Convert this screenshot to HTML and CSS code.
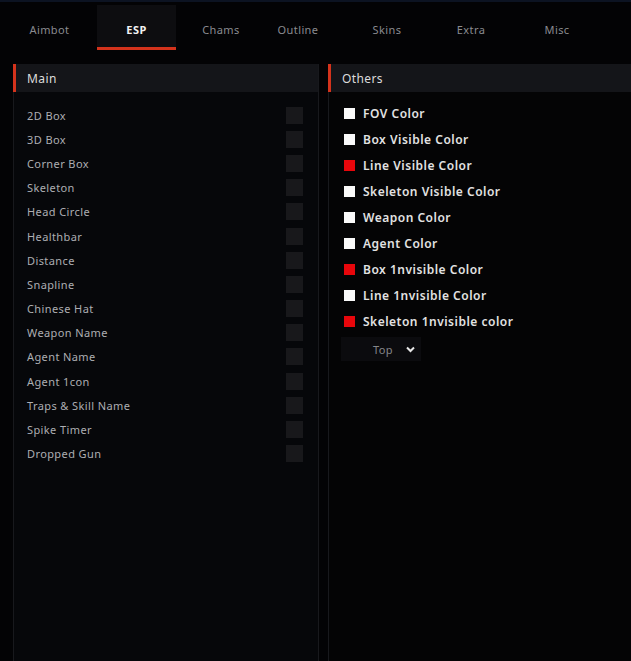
FILE: index.html
```html
<!DOCTYPE html>
<html lang="en">

<head>
  <meta charset="UTF-8" />
  <title>ESP</title>
  <link rel="stylesheet" href="styles.css">
</head>

<body>
  <div class="menu">
    <ul class="tabs">
      <li>Aimbot</li>
      <li class="current">ESP</li>
      <li>Chams</li>
      <li>Outline</li>
      <li>Skins</li>
      <li>Extra</li>
      <li>Misc</li>
    </ul>

    <div class="panels">
      <!-- 左侧 Main -->
      <div class="panel main">
        <div class="panel-head">Main</div>
        <ul class="toggles">
          <li><span>2D Box</span><i></i></li>
          <li><span>3D Box</span><i></i></li>
          <li><span>Corner Box</span><i></i></li>
          <li><span>Skeleton</span><i></i></li>
          <li><span>Head Circle</span><i></i></li>
          <li><span>Healthbar</span><i></i></li>
          <li><span>Distance</span><i></i></li>
          <li><span>Snapline</span><i></i></li>
          <li><span>Chinese Hat</span><i></i></li>
          <li><span>Weapon Name</span><i></i></li>
          <li><span>Agent Name</span><i></i></li>
          <li><span>Agent 1con</span><i></i></li>
          <li><span>Traps &amp; Skill Name</span><i></i></li>
          <li><span>Spike Timer</span><i></i></li>
          <li><span>Dropped Gun</span><i></i></li>
        </ul>
      </div>

      <!-- 右侧 Others -->
      <div class="panel others">
        <div class="panel-head">Others</div>
        <ul class="colors">
          <li><i class="white"></i>FOV Color</li>
          <li><i class="white"></i>Box Visible Color</li>
          <li><i class="red"></i>Line Visible Color</li>
          <li><i class="white"></i>Skeleton Visible Color</li>
          <li><i class="white"></i>Weapon Color</li>
          <li><i class="white"></i>Agent Color</li>
          <li><i class="red"></i>Box 1nvisible Color</li>
          <li><i class="white"></i>Line 1nvisible Color</li>
          <li><i class="red"></i>Skeleton 1nvisible color</li>
        </ul>
        <div class="select">
          <span>Top</span>
          <svg width="9" height="7" viewBox="0 0 9 7">
            <path d="M1 1.5 L4.5 5 L8 1.5" fill="none" stroke="#e8e8e8" stroke-width="2" />
          </svg>
        </div>
      </div>
    </div>
  </div>
</body>

</html>
```

FILE: styles.css
```css
* {
  padding: 0;
  margin: 0;
  list-style: none;
  box-sizing: border-box;
}

body {
  background: #000;
  font-family: "Noto Sans", "DejaVu Sans", sans-serif;
  width: 631px;
  height: 661px;
  overflow: hidden;
}

.menu {
  height: 661px;
  border-top: 2px solid #0c1322;
  background: #030305;
  display: flex;
  flex-direction: column;
}

.tabs {
  display: flex;
  height: 48px;
  padding: 3px 0 0 6px;
  margin-bottom: 14px;
}

.tabs li {
  display: flex;
  align-items: center;
  justify-content: center;
  font-size: 11px;
  letter-spacing: 0.4px;
  color: #8a8b90;
  border-bottom: 3px solid transparent;
  padding-top: 7px;
}

/* 每个页签宽度不一样 */
.tabs li:nth-child(1) { width: 87px; }
.tabs li:nth-child(3) { width: 84px; }
.tabs li:nth-child(4) { width: 70px; }
.tabs li:nth-child(5) { width: 108px; }
.tabs li:nth-child(6) { width: 60px; }
.tabs li:nth-child(7) { width: 112px; }

.tabs li.current {
  width: 79px;
  margin: 0 3px 0 4px;
  background: #0d0d10;
  color: #f2f2f2;
  font-weight: bold;
  border-bottom-color: #d4331c;
}

.panels {
  flex: 1;
  display: flex;
  gap: 9px;
  padding-left: 13px;
}

.panel {
  display: flex;
  flex-direction: column;
  background: #06070a;
  border-left: 1px solid #18191d;
  border-right: 1px solid #18191d;
}

.panel.main {
  width: 306px;
}

.panel.others {
  flex: 1;
  border-right: 0;
  background: #040405;
}

.panel-head {
  height: 28px;
  line-height: 29px;
  background: #141519;
  border-left: 3px solid #d4331c;
  margin-left: -1px;
  padding-left: 11px;
  font-size: 12px;
  letter-spacing: 0.4px;
  color: #dcdcdc;
}

.toggles {
  padding: 11px 15px 0 13px;
}

.toggles li {
  height: 24.2px;
  display: flex;
  align-items: center;
  justify-content: space-between;
  font-size: 11px;
  letter-spacing: 0.4px;
  color: #adaeb2;
}

.toggles i {
  width: 17px;
  height: 17px;
  background: #18181b;
}

.colors {
  padding: 8px 0 0 15px;
}

.colors li {
  height: 26px;
  display: flex;
  align-items: center;
  gap: 8px;
  font-size: 12px;
  font-weight: 600;
  letter-spacing: 0.5px;
  color: #e2e2e2;
}

.colors i {
  width: 11px;
  height: 11px;
}

.colors i.white {
  background: #fafafa;
}

.colors i.red {
  background: #e8060b;
}

.select {
  width: 80px;
  height: 24px;
  margin: 3px 0 0 12px;
  background: #0b0b0e;
  display: flex;
  align-items: center;
  gap: 13px;
  padding-left: 32px;
  font-size: 11px;
  letter-spacing: 0.4px;
  color: #85868a;
}
```
